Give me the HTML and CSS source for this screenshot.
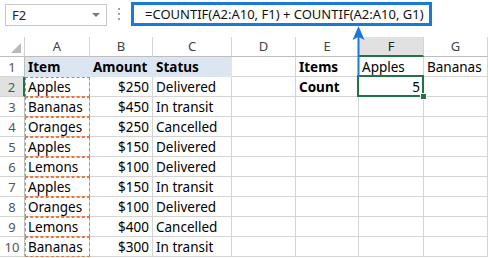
FILE: index.html
```html
<!DOCTYPE html>
<html>
<head>
<meta charset="utf-8">
<link rel="stylesheet" href="styles.css">
</head>
<body>
<div class="bar">
  <div class="namebox"><span class="nb-text">F2</span><span class="caret"></span></div>
  <div class="dots"><i></i><i></i><i></i></div>
  <div class="fx">=COUNTIF(A2:A10, F1) + COUNTIF(A2:A10, G1)</div>
</div>
<div class="sheet">
  <div class="corner"></div>
  <div class="ch">A</div><div class="ch">B</div><div class="ch">C</div><div class="ch">D</div><div class="ch">E</div><div class="ch sel">F</div><div class="ch">G</div>

  <div class="rh">1</div>
  <div class="c hd">Item</div><div class="c hd">Amount</div><div class="c hd">Status</div><div class="c"></div><div class="c b">Items</div><div class="c">Apples</div><div class="c">Bananas</div>

  <div class="rh sel">2</div>
  <div class="c ref">Apples</div><div class="c r">$250</div><div class="c">Delivered</div><div class="c"></div><div class="c b">Count</div><div class="c r active">5</div><div class="c"></div>

  <div class="rh">3</div>
  <div class="c ref">Bananas</div><div class="c r">$450</div><div class="c">In transit</div><div class="c"></div><div class="c"></div><div class="c"></div><div class="c"></div>

  <div class="rh">4</div>
  <div class="c ref">Oranges</div><div class="c r">$250</div><div class="c">Cancelled</div><div class="c"></div><div class="c"></div><div class="c"></div><div class="c"></div>

  <div class="rh">5</div>
  <div class="c ref">Apples</div><div class="c r">$150</div><div class="c">Delivered</div><div class="c"></div><div class="c"></div><div class="c"></div><div class="c"></div>

  <div class="rh">6</div>
  <div class="c ref">Lemons</div><div class="c r">$100</div><div class="c">Delivered</div><div class="c"></div><div class="c"></div><div class="c"></div><div class="c"></div>

  <div class="rh">7</div>
  <div class="c ref">Apples</div><div class="c r">$150</div><div class="c">In transit</div><div class="c"></div><div class="c"></div><div class="c"></div><div class="c"></div>

  <div class="rh">8</div>
  <div class="c ref">Oranges</div><div class="c r">$100</div><div class="c">Delivered</div><div class="c"></div><div class="c"></div><div class="c"></div><div class="c"></div>

  <div class="rh">9</div>
  <div class="c ref">Lemons</div><div class="c r">$400</div><div class="c">Cancelled</div><div class="c"></div><div class="c"></div><div class="c"></div><div class="c"></div>

  <div class="rh">10</div>
  <div class="c ref">Bananas</div><div class="c r">$300</div><div class="c">In transit</div><div class="c"></div><div class="c"></div><div class="c"></div><div class="c"></div>
</div>
<svg class="arrow" width="20" height="52" viewBox="0 0 20 52">
  <line x1="9.5" y1="10" x2="9.5" y2="52" stroke="#1a7ad9" stroke-width="2"/>
  <polygon points="9.5,1 3.5,15 9.5,12 15.5,15" fill="#1a7ad9"/>
</svg>
</body>
</html>
```

FILE: styles.css
```css
html, body {
  margin: 0;
  padding: 0;
  background: #ffffff;
}
body {
  width: 488px;
  height: 258px;
  overflow: hidden;
  position: relative;
  font-family: "Noto Sans", "Open Sans", sans-serif;
  color: #000;
}
.bar {
  height: 37px;
  display: flex;
  align-items: flex-start;
  box-sizing: border-box;
  padding-top: 2px;
}
.namebox {
  margin-left: 5px;
  margin-top: 2px;
  width: 102px;
  height: 22px;
  box-sizing: border-box;
  border: 1px solid #c8c8c8;
  display: flex;
  align-items: center;
  justify-content: space-between;
  padding: 0 6px 0 6px;
  font-size: 13px;
  color: #222;
}
.caret {
  width: 0;
  height: 0;
  border-left: 4px solid transparent;
  border-right: 4px solid transparent;
  border-top: 4px solid #7a7a7a;
}
.dots {
  width: 24px;
  height: 24px;
  display: flex;
  flex-direction: column;
  align-items: center;
  justify-content: center;
  gap: 3px;
}
.dots i {
  display: block;
  width: 2px;
  height: 2px;
  background: #a0a0a0;
}
.fx {
  width: 301px;
  height: 24px;
  box-sizing: border-box;
  border: 3px solid #1a7ad9;
  padding-left: 11px;
  font-size: 13px;
  line-height: 18px;
  white-space: nowrap;
  color: #111;
}
.sheet {
  display: grid;
  grid-template-columns: 25px 65px 63px 79px 64px 63px 65px 64px;
  grid-auto-rows: 20px;
  font-size: 13.5px;
}
.corner {
  position: relative;
  border-right: 1px solid #d0d0d0;
  border-bottom: 1px solid #bdbdbd;
  box-sizing: border-box;
}
.corner::after {
  content: "";
  position: absolute;
  right: 3px;
  bottom: 3px;
  width: 0;
  height: 0;
  border-left: 10px solid transparent;
  border-bottom: 10px solid #b9b9b9;
}
.ch {
  box-sizing: border-box;
  border-right: 1px solid #d4d4d4;
  border-bottom: 1px solid #bdbdbd;
  text-align: center;
  font-size: 13px;
  line-height: 19px;
  color: #444;
}
.ch.sel {
  background: #e1e1e1;
  border-bottom: 2px solid #217346;
  color: #222;
}
.rh {
  box-sizing: border-box;
  border-right: 1px solid #bdbdbd;
  border-bottom: 1px solid #d4d4d4;
  text-align: center;
  font-size: 13px;
  line-height: 20px;
  color: #555;
}
.rh.sel {
  background: #e1e1e1;
  border-right: 2px solid #217346;
  color: #217346;
}
.c {
  box-sizing: border-box;
  border-right: 1px solid #d4d4d4;
  border-bottom: 1px solid #d4d4d4;
  padding: 0 3px;
  line-height: 20px;
  white-space: nowrap;
  overflow: visible;
  position: relative;
}
.c.hd {
  background: #dce6f2;
  border-color: #dce6f2;
  font-weight: bold;
}
.c.b {
  font-weight: bold;
}
.c.r {
  text-align: right;
}
.c.ref {
  outline: 1px dashed #e4783f;
  outline-offset: -1px;
}
.c.active::after {
  content: "";
  position: absolute;
  left: -2px;
  top: -2px;
  right: -1px;
  bottom: -1px;
  border: 2px solid #217346;
}
.c.active::before {
  content: "";
  position: absolute;
  right: -4px;
  bottom: -4px;
  width: 5px;
  height: 5px;
  background: #217346;
  border: 1px solid #ffffff;
  z-index: 2;
}
.arrow {
  position: absolute;
  left: 349px;
  top: 25px;
}
```
